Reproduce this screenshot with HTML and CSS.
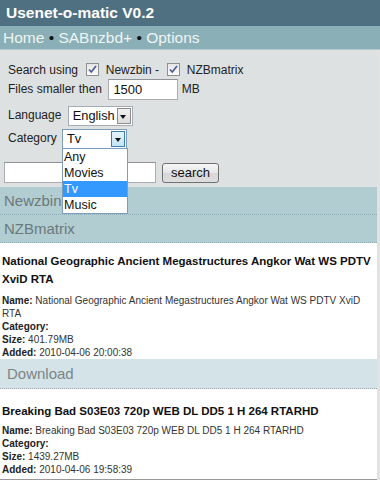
FILE: index.html
```html
<!DOCTYPE html>
<html lang="en">
<head>
    <meta charset="UTF-8">
    <meta name="viewport" content="width=device-width, initial-scale=1.0">
    <title>Usenet-o-matic V0.2</title>
    <link rel="stylesheet" href="styles.css">
</head>
<body>
    <div class="top">
        <div class="title">Usenet-o-matic V0.2</div>
        <div class="nav">
            <a href="#">Home</a> <span class="dot">&bull;</span> <a href="#">SABnzbd+</a> <span class="dot">&bull;</span> <a href="#">Options</a>
        </div>
    </div>

    <div class="page">
        <form class="search" onsubmit="return false">
            <div class="row r1">
                Search using <span class="check"><svg width="11" height="11" viewBox="0 0 11 11"><path d="M2 5.5 L4.3 8 L9 2" fill="none" stroke="#4b5d93" stroke-width="1.7"/></svg></span> Newzbin - <span class="check"><svg width="11" height="11" viewBox="0 0 11 11"><path d="M2 5.5 L4.3 8 L9 2" fill="none" stroke="#4b5d93" stroke-width="1.7"/></svg></span> NZBmatrix
            </div>
            <div class="row r2">
                Files smaller then <input type="text" class="size" value="1500"> MB
            </div>
            <div class="row r3">
                Language <span class="select lang"><span class="val">English</span><span class="arrow"></span></span>
            </div>
            <div class="row r4">
                Category <span class="select cat"><span class="val">Tv</span><span class="arrow"></span>
                    <span class="list">
                        <span class="opt">Any</span>
                        <span class="opt">Movies</span>
                        <span class="opt sel">Tv</span>
                        <span class="opt">Music</span>
                    </span>
                </span>
            </div>
            <div class="row r5">
                <input type="text" class="query"><button type="button">search</button>
            </div>
        </form>

        <div class="bar">Newzbin</div>
        <div class="bar">NZBmatrix</div>

        <div class="item">
            <h3>National Geographic Ancient Megastructures Angkor Wat WS PDTV XviD RTA</h3>
            <div class="details">
                <b>Name:</b> National Geographic Ancient Megastructures Angkor Wat WS PDTV XviD RTA<br>
                <b>Category:</b><br>
                <b>Size:</b> 401.79MB<br>
                <b>Added:</b> 2010-04-06 20:00:38
            </div>
        </div>
        <div class="bar download">Download</div>

        <div class="item last">
            <h3>Breaking Bad S03E03 720p WEB DL DD5 1 H 264 RTARHD</h3>
            <div class="details">
                <b>Name:</b> Breaking Bad S03E03 720p WEB DL DD5 1 H 264 RTARHD<br>
                <b>Category:</b><br>
                <b>Size:</b> 1439.27MB<br>
                <b>Added:</b> 2010-04-06 19:58:39
            </div>
        </div>
    </div>
</body>
</html>
```

FILE: styles.css
```css
* {
    margin: 0;
    padding: 0;
    box-sizing: border-box;
}

body {
    font-family: "Liberation Sans", Arial, sans-serif;
    background-color: #fff;
    color: #222;
}

.top .title {
    height: 26px;
    line-height: 26px;
    padding-left: 6px;
    background-color: #4f7081;
    color: #fff;
    font-size: 15.5px;
    font-weight: bold;
}

.nav {
    height: 24px;
    line-height: 23px;
    padding-left: 3px;
    background-color: #8aafb6;
    border-bottom: 1px solid #b4cbce;
    font-size: 15.5px;
}

.nav a {
    color: #eef5f5;
    text-decoration: none;
}

.nav .dot {
    color: #111;
}

.page {
    border-right: 3px solid #e2e2e2;
}

.search {
    background-color: #dee1e1;
    padding: 12px 0 4px 8px;
    font-size: 12px;
    color: #222;
}

.row {
    display: block;
    white-space: nowrap;
}

.r1 {
    height: 16px;
    line-height: 16px;
}

.r2 {
    margin-top: 1px;
    height: 21px;
    line-height: 21px;
}

.r3 {
    margin-top: 5px;
    height: 20px;
    line-height: 20px;
}

.r4 {
    margin-top: 3px;
    height: 20px;
    line-height: 20px;
}

.r5 {
    margin-top: 14px;
    margin-left: -4px;
    height: 21px;
    display: flex;
    align-items: center;
}

.check {
    display: inline-block;
    width: 13px;
    height: 13px;
    margin: 0 3px 0 5px;
    border: 1px solid #8e8f8f;
    background: linear-gradient(#e6e6e6, #fbfbfb);
    vertical-align: -2px;
    position: relative;
}

.check svg {
    position: absolute;
    left: 0;
    top: 0;
}

input[type="text"] {
    font-family: "Liberation Sans", Arial, sans-serif;
    font-size: 13px;
    color: #111;
    border: 1px solid #abadb3;
    border-top-color: #8e9196;
    background-color: #fff;
    outline: none;
}

.size {
    width: 70px;
    height: 21px;
    padding: 0 4px;
    margin-left: 3px;
    vertical-align: middle;
}

.query {
    width: 152px;
    height: 21px;
    padding: 0 3px;
}

button {
    width: 57px;
    height: 20px;
    margin-left: 6px;
    font-family: "Liberation Sans", Arial, sans-serif;
    font-size: 13px;
    color: #111;
    border: 1px solid #707070;
    border-radius: 3px;
    background: linear-gradient(#f6f6f6 0%, #e6e6e6 50%, #d6d6d6 51%, #dedede 100%);
    cursor: pointer;
}

.select {
    display: inline-flex;
    position: relative;
    height: 20px;
    vertical-align: middle;
    border: 1px solid #a5acb5;
    background-color: #fff;
}

.select .val {
    flex: 1;
    padding-left: 4px;
    font-size: 12.8px;
    line-height: 18px;
    color: #111;
}

.select .arrow {
    width: 14px;
    margin: 1px;
    border: 1px solid #8d8d8d;
    background: linear-gradient(#f2f2f2, #dcdcdc);
    position: relative;
}

.select .arrow::after {
    content: "";
    position: absolute;
    left: 2.5px;
    top: 6px;
    border-left: 3.5px solid transparent;
    border-right: 3.5px solid transparent;
    border-top: 4px solid #111;
}

.lang {
    width: 65px;
    margin-left: 3px;
}

.cat {
    width: 65px;
    margin-left: 2px;
    border-color: #7f9db9;
}

.cat .arrow {
    border-color: #3c7fb1;
    background: linear-gradient(#e5f3fb, #c4e3f6);
}

.list {
    position: absolute;
    left: -1px;
    top: 100%;
    width: 66px;
    border: 1px solid #7f9db9;
    background-color: #fff;
    z-index: 2;
}

.opt {
    display: block;
    height: 16px;
    line-height: 16px;
    padding-left: 1px;
    font-size: 12.5px;
    color: #111;
}

.opt.sel {
    background-color: #3399ff;
    color: #fff;
}

.bar {
    height: 28px;
    line-height: 27px;
    padding-left: 4px;
    font-size: 15px;
    color: #6c797c;
    background-color: #b1cdd1;
    border-bottom: 1px dotted #8eafb6;
}

.bar.download {
    height: 30px;
    line-height: 29px;
    padding-left: 7px;
    color: #7a8588;
    background-color: #d4e3e7;
    border-bottom: 1px dotted #9aa6a9;
}

.item {
    padding: 9px 0 0 2px;
}

.item.last {
    padding-top: 13px;
    padding-bottom: 3px;
    border-bottom: 2px solid #999;
}

.item h3 {
    font-size: 11.5px;
    line-height: 18px;
    color: #111;
}

.details {
    margin-top: 6px;
    font-size: 10px;
    line-height: 13px;
    color: #333;
}

.item.last .details {
    margin-top: 4px;
}

.details b {
    color: #222;
}
```
